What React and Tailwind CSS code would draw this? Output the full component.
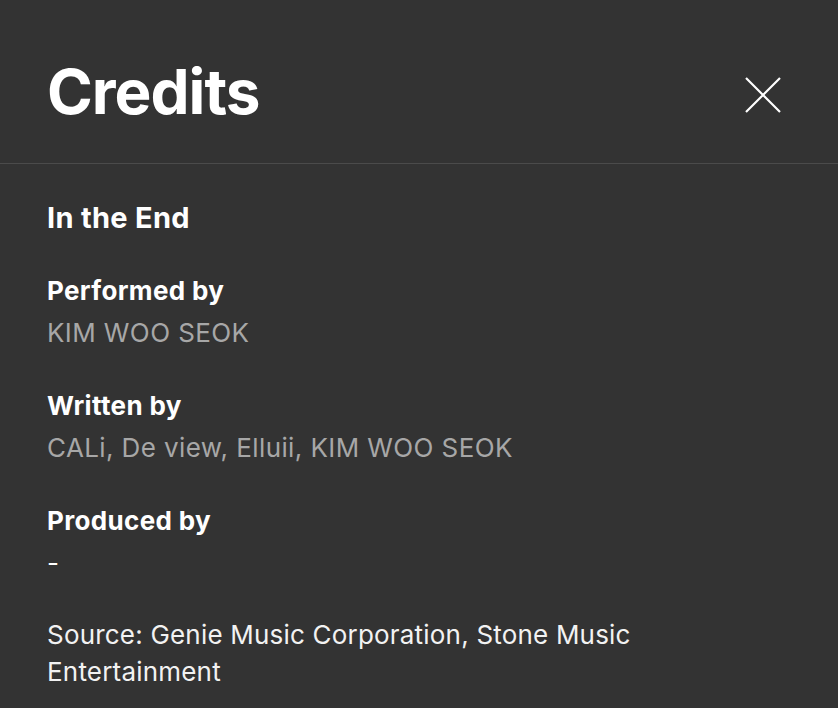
export default function App() {
  const sections = [
    { label: "Performed by", value: "KIM WOO SEOK", muted: true },
    { label: "Written by", value: "CALi, De view, Elluii, KIM WOO SEOK", muted: true },
    { label: "Produced by", value: "-", muted: false },
  ];

  return (
    <div className="h-[708px] w-[838px] overflow-hidden bg-[#333333] font-['Inter',sans-serif] text-white">
      <div className="flex h-[164px] items-center justify-between border-b border-[#4b4b4b] px-[47px] pt-[20px]">
        <h1 className="text-[62px] font-bold leading-none tracking-[-1px]">Credits</h1>
        <button className="mr-[10px] mt-[6px] flex h-[36px] w-[36px] items-center justify-center">
          <svg width="36" height="36" viewBox="0 0 36 36" fill="none">
            <path d="M1 1 L35 35 M35 1 L1 35" stroke="white" strokeWidth="2.2" />
          </svg>
        </button>
      </div>

      <div className="px-[47px] pt-[33px]">
        <h2 className="text-[29px] font-bold leading-[42px] tracking-[0.3px]">In the End</h2>

        {sections.map((s, i) => (
          <div key={i} className="mt-[31px]">
            <div className="text-[26px] font-bold leading-[42px] tracking-[0.35px]">{s.label}</div>
            <div
              className={
                s.muted
                  ? "text-[26px] leading-[42px] tracking-[0.4px] text-[#a7a7a7]"
                  : "text-[26px] leading-[42px] text-white"
              }
            >
              {s.value}
            </div>
          </div>
        ))}

        <p className="mt-[32px] max-w-[640px] text-[26px] leading-[37px] tracking-[0.2px] text-[#f2f2f2]">
          Source: Genie Music Corporation, Stone Music Entertainment
        </p>
      </div>
    </div>
  );
}
